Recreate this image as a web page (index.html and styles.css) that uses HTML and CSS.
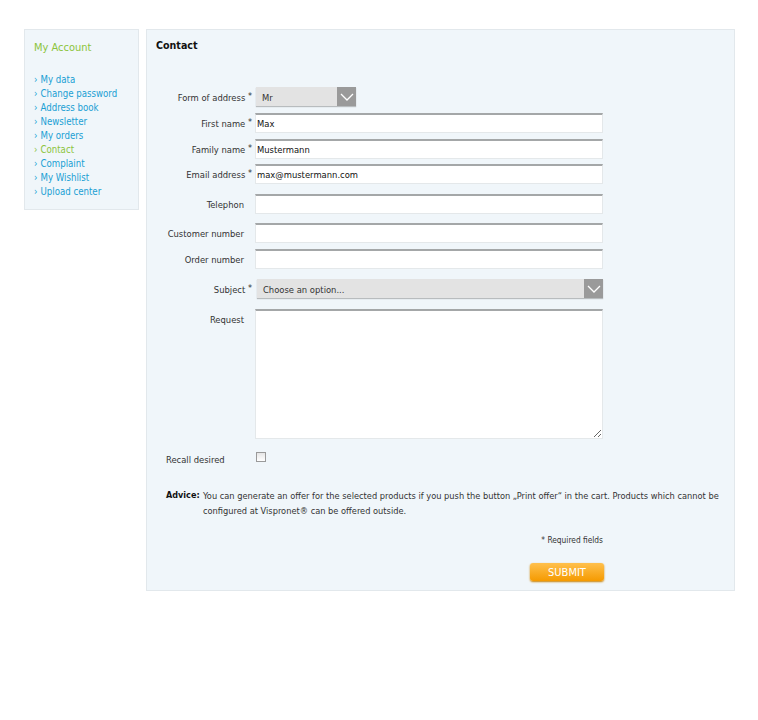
FILE: index.html
```html
<!DOCTYPE html>
<html lang="en">
<head>
    <meta charset="UTF-8">
    <title>Contact</title>
    <link rel="stylesheet" href="styles.css">
</head>
<body>

<div class="page">
    <!-- Account menu -->
    <aside class="account-box">
        <h2>My Account</h2>
        <ul>
            <li><a href="#">My data</a></li>
            <li><a href="#">Change password</a></li>
            <li><a href="#">Address book</a></li>
            <li><a href="#">Newsletter</a></li>
            <li><a href="#">My orders</a></li>
            <li class="active"><a href="#">Contact</a></li>
            <li><a href="#">Complaint</a></li>
            <li><a href="#">My Wishlist</a></li>
            <li><a href="#">Upload center</a></li>
        </ul>
    </aside>

    <!-- Contact form -->
    <main class="contact-box">
        <h1>Contact</h1>

        <form class="contact-form">
            <div class="row row-address">
                <label>Form of address <sup>*</sup></label>
                <div class="select">
                    <span>Mr</span>
                    <i class="arrow"><svg width="14" height="10" viewBox="0 0 14 10"><path d="M1 2 L7 8 L13 2" fill="none" stroke="#fff" stroke-width="1.3"/></svg></i>
                </div>
            </div>
            <div class="row row-first">
                <label>First name <sup>*</sup></label>
                <input type="text" value="Max">
            </div>
            <div class="row">
                <label>Family name <sup>*</sup></label>
                <input type="text" value="Mustermann">
            </div>
            <div class="row row-tight">
                <label>Email address <sup>*</sup></label>
                <input type="text" value="max@mustermann.com">
            </div>
            <div class="row row-wide">
                <label class="plain">Telephon</label>
                <input type="text">
            </div>
            <div class="row row-mid">
                <label class="plain">Customer number</label>
                <input type="text">
            </div>
            <div class="row">
                <label class="plain">Order number</label>
                <input type="text">
            </div>
            <div class="row row-wide">
                <label>Subject <sup>*</sup></label>
                <div class="select select-subject">
                    <span>Choose an option...</span>
                    <i class="arrow"><svg width="14" height="10" viewBox="0 0 14 10"><path d="M1 2 L7 8 L13 2" fill="none" stroke="#fff" stroke-width="1.3"/></svg></i>
                </div>
            </div>
            <div class="row row-request">
                <label class="plain">Request</label>
                <textarea></textarea>
            </div>

            <div class="recall">
                <label>Recall desired</label>
                <span class="checkbox"></span>
            </div>

            <div class="advice">
                <b>Advice:</b>
                <p>You can generate an offer for the selected products if you push the button „Print offer“ in the cart. Products which cannot be configured at Vispronet® can be offered outside.</p>
            </div>

            <div class="required">* Required fields</div>

            <div class="actions">
                <button type="button" class="submit-btn">SUBMIT</button>
            </div>
        </form>
    </main>
</div>

</body>
</html>
```

FILE: styles.css
```css
* {
    margin: 0;
    padding: 0;
    box-sizing: border-box;
}

body {
    background: #fff;
    color: #333;
    font-family: 'DejaVu Sans Condensed', 'Liberation Sans', sans-serif;
    font-size: 9.35px;
}

.page {
    display: flex;
    align-items: flex-start;
    gap: 7px;
    padding: 29px 23px 0 24px;
}

/* Account menu */
.account-box {
    width: 115px;
    background: #f0f6fa;
    border: 1px solid #e2e8ec;
    padding: 11px 0 10px 9px;
}

.account-box h2 {
    font-size: 11px;
    font-weight: normal;
    color: #8cc43c;
    line-height: 14px;
    margin-bottom: 18px;
}

.account-box ul {
    list-style: none;
}

.account-box li {
    font-size: 9.6px;
    line-height: 14px;
}

.account-box li::before {
    content: "\203A";
    color: #1a9fd4;
    margin-right: 3px;
}

.account-box a {
    color: #1a9fd4;
    text-decoration: none;
}

.account-box li.active a,
.account-box li.active::before {
    color: #8cc43c;
}

/* Contact box */
.contact-box {
    flex: 1;
    height: 562px;
    background: #f0f6fa;
    border: 1px solid #e2e8ec;
    padding: 8px 0 0 9px;
}

.contact-box h1 {
    font-size: 10.6px;
    font-weight: bold;
    color: #111;
    line-height: 14px;
}

/* Form rows */
.row {
    display: flex;
    align-items: center;
    margin-top: 6px;
}

.row-address {
    margin-top: 35px;
}

.row-first {
    margin-top: 7px;
}

.row-tight {
    margin-top: 5px;
}

.row-wide {
    margin-top: 10px;
}

.row-mid {
    margin-top: 9px;
}

.row-request {
    margin-top: 11px;
    align-items: flex-start;
}

.row-request label {
    padding-top: 5px;
}

.row label {
    width: 96px;
    text-align: right;
    margin-right: 3px;
    white-space: nowrap;
}

.row label.plain {
    padding-right: 8px;
}

.row label sup {
    font-size: 9px;
    vertical-align: 2px;
}

.row input,
.row textarea {
    width: 348px;
    height: 20px;
    border: 1px solid #e4e8ea;
    border-top: 2px solid #a4a7a8;
    background: #fff;
    font-family: inherit;
    font-size: 9.35px;
    color: #111;
    padding: 0 1px;
    outline: none;
}

.row textarea {
    height: 130px;
    resize: both;
}

.select {
    width: 100px;
    height: 19px;
    display: flex;
    align-items: center;
    background: #e3e3e3;
    box-shadow: 0 1px 1px #b8bcbe;
    margin-left: 1px;
}

.select span {
    flex: 1;
    padding-left: 6px;
    padding-top: 2px;
}

.select-subject {
    width: 346px;
    margin-left: 2px;
}

.select .arrow {
    width: 19px;
    height: 19px;
    background: #9a9a9a;
    display: flex;
    align-items: center;
    justify-content: center;
}

/* Recall */
.recall {
    display: flex;
    align-items: center;
    margin: 15px 0 0 10px;
}

.recall label {
    width: 90px;
}

.checkbox {
    width: 10px;
    height: 10px;
    border: 1px solid #9a9a9a;
    background: linear-gradient(#e6e6e6, #fff);
    margin-top: -6px;
}

/* Advice */
.advice {
    display: flex;
    margin: 23px 0 0 10px;
    line-height: 15px;
}

.advice b {
    color: #111;
    font-size: 9px;
    width: 37px;
    flex-shrink: 0;
}

.advice p {
    width: 530px;
    font-size: 9.2px;
}

.required {
    width: 447px;
    text-align: right;
    font-size: 8.3px;
    margin-top: 17px;
}

.actions {
    width: 448px;
    display: flex;
    justify-content: flex-end;
    margin-top: 18px;
}

.submit-btn {
    width: 74px;
    height: 18px;
    border: none;
    border-radius: 3px;
    background: linear-gradient(#ffc04d, #f59a00);
    box-shadow: 0 1px 2px #c98000;
    color: #fff;
    font-family: inherit;
    font-size: 11px;
    cursor: pointer;
}
```
